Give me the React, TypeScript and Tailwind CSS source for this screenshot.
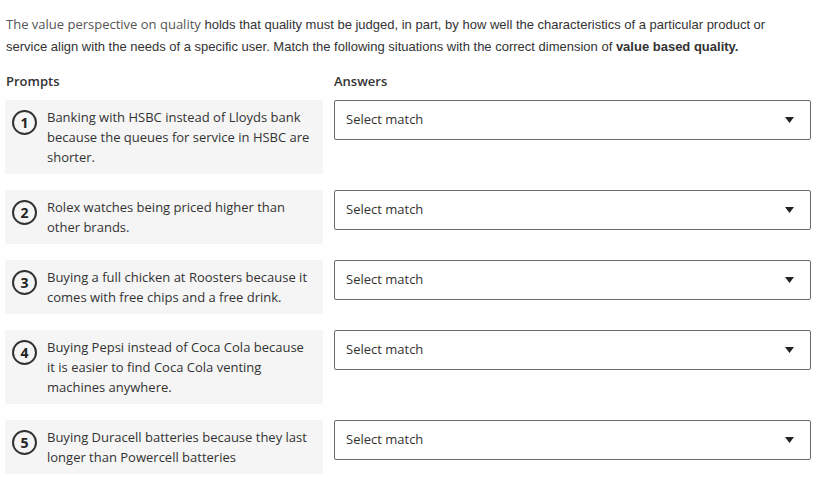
import React from "react";

const prompts = [
  ["Banking with HSBC instead of Lloyds bank", "because the queues for service in HSBC are", "shorter."],
  ["Rolex watches being priced higher than", "other brands."],
  ["Buying a full chicken at Roosters because it", "comes with free chips and a free drink."],
  ["Buying Pepsi instead of Coca Cola because", "it is easier to find Coca Cola venting", "machines anywhere."],
  ["Buying Duracell batteries because they last", "longer than Powercell batteries"],
];

export default function App() {
  return (
    <div className="w-[837px] h-[477px] bg-white px-[5px] pt-[13px] text-[#333]" style={{ fontFamily: '"Open Sans", sans-serif' }}>
      <p className="px-[1px] text-[13px] leading-[22px] text-[#333]" style={{ fontFamily: '"Liberation Sans", Arial, sans-serif' }}>
        <span className="text-[#555]" style={{ fontFamily: '"Open Sans", sans-serif' }}>The value perspective on quality</span> holds that quality must be judged, in part, by how well the characteristics of a particular product or
        <br />
        service align with the needs of a specific user. Match the following situations with the correct dimension of <b>value based quality.</b>
      </p>
      <div className="mt-[13px] grid grid-cols-[318px_477px] gap-x-[11px] text-[13px] font-semibold leading-[20px] text-[#333]">
        <div className="px-[1px]">Prompts</div>
        <div>Answers</div>
      </div>
      <div className="mt-[9px] flex flex-col gap-[16px]">
        {prompts.map((lines, i) => (
          <div key={i} className="grid grid-cols-[318px_477px] gap-x-[11px] items-start">
            <div className="flex items-start gap-[10px] rounded-[2px] bg-[#f5f5f5] pl-[7px] pr-[4px] py-[7px]">
              <div className="mt-[3px] flex size-[25px] min-w-[25px] shrink-0 items-center justify-center rounded-full border-2 border-[#333] text-[14px] font-bold leading-none text-[#222]">
                {i + 1}
              </div>
              <div className="text-[13px] leading-[20px] text-[#333]">
                {lines.map((l, j) => (
                  <div key={j} className="whitespace-nowrap">{l}</div>
                ))}
              </div>
            </div>
            <div className="flex h-[40px] items-center justify-between rounded-[2px] border border-[#6b6b6b] bg-white pl-[11px] pr-[16px]">
              <span className="text-[13px] text-[#333]">Select match</span>
              <svg width="9" height="6" viewBox="0 0 9 6">
                <path d="M0 0 H9 L4.5 6 Z" fill="#222" />
              </svg>
            </div>
          </div>
        ))}
      </div>
    </div>
  );
}
